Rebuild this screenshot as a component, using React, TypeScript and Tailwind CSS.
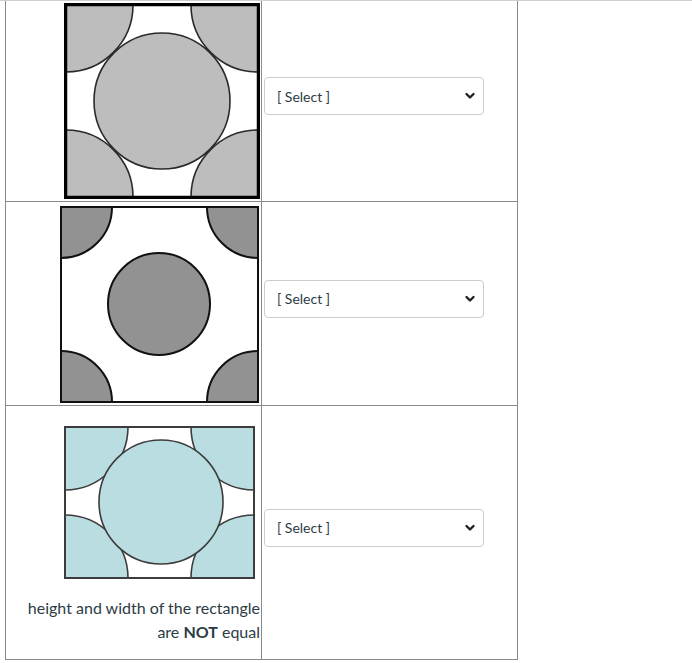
const FONT = { fontFamily: 'Lato, "Open Sans", sans-serif' }

function SelectBox() {
  return (
    <div className="flex h-[38px] w-[220px] items-center justify-between rounded-[4px] border border-[#c7cdd1] bg-white pl-[12px] pr-[6px] text-[14px] text-[#2d3b45]">
      <span>[ Select ]</span>
      <svg width="12" height="12" viewBox="0 0 12 12" className="mr-[1px]">
        <polyline points="2.5,4 6,7.5 9.5,4" fill="none" stroke="#222" strokeWidth="2.4" strokeLinecap="round" strokeLinejoin="round" />
      </svg>
    </div>
  )
}

function FccSquare() {
  const s = 196
  const r = 67
  const stroke = '#2a2a2a'
  return (
    <svg width={s} height={s} viewBox={`0 0 ${s} ${s}`}>
      <rect x="0" y="0" width={s} height={s} fill="#ffffff" />
      {[
        [2, 2],
        [s - 2, 2],
        [2, s - 2],
        [s - 2, s - 2],
      ].map(([cx, cy]) => (
        <circle key={`${cx}-${cy}`} cx={cx} cy={cy} r={r} fill="#bdbdbd" stroke={stroke} strokeWidth="1.6" />
      ))}
      <circle cx={s / 2} cy={s / 2} r={68} fill="#bdbdbd" stroke={stroke} strokeWidth="1.6" />
      <rect x="1.5" y="1.5" width={s - 3} height={s - 3} fill="none" stroke="#000" strokeWidth="3.5" />
    </svg>
  )
}

function BccSquare() {
  const w = 199
  const h = 197
  const r = 51
  return (
    <svg width={w} height={h} viewBox={`0 0 ${w} ${h}`}>
      <rect x="0" y="0" width={w} height={h} fill="#ffffff" />
      {[
        [1, 1],
        [w - 1, 1],
        [1, h - 1],
        [w - 1, h - 1],
      ].map(([cx, cy]) => (
        <circle key={`${cx}-${cy}`} cx={cx} cy={cy} r={r} fill="#929292" stroke="#111" strokeWidth="2" />
      ))}
      <circle cx={99} cy={98} r={51} fill="#929292" stroke="#111" strokeWidth="2" />
      <rect x="1" y="1" width={w - 2} height={h - 2} fill="none" stroke="#111" strokeWidth="2" />
    </svg>
  )
}

function RectCell() {
  const w = 191
  const h = 153
  const r = 63
  const stroke = '#3c3c3c'
  return (
    <svg width={w} height={h} viewBox={`0 0 ${w} ${h}`}>
      <rect x="0" y="0" width={w} height={h} fill="#ffffff" />
      {[
        [1, 1],
        [w - 1, 1],
        [1, h - 1],
        [w - 1, h - 1],
      ].map(([cx, cy]) => (
        <circle key={`${cx}-${cy}`} cx={cx} cy={cy} r={r} fill="#b9dde1" stroke={stroke} strokeWidth="1.6" />
      ))}
      <circle cx={97} cy={76} r={62} fill="#b9dde1" stroke={stroke} strokeWidth="1.6" />
      <rect x="1" y="1" width={w - 2} height={h - 2} fill="none" stroke={stroke} strokeWidth="2" />
    </svg>
  )
}

export default function App() {
  return (
    <div className="h-[663px] w-[692px] border-t border-[#cfcfcf] bg-white" style={FONT}>
      <div className="ml-[5px] w-[513px] border-x border-[#8a8a8a]">
        <div className="grid h-[201px] grid-cols-[256px_255px] border-b border-[#8a8a8a]">
          <div className="flex items-center justify-end border-r border-[#8a8a8a] pr-[1px]">
            <FccSquare />
          </div>
          <div className="flex items-center pb-[10px] pl-[2px]">
            <SelectBox />
          </div>
        </div>

        <div className="grid h-[204px] grid-cols-[256px_255px] border-b border-[#8a8a8a]">
          <div className="flex items-center justify-end border-r border-[#8a8a8a] pr-[2px] pt-[2px]">
            <BccSquare />
          </div>
          <div className="flex items-center pb-[10px] pl-[2px]">
            <SelectBox />
          </div>
        </div>

        <div className="grid h-[254px] grid-cols-[256px_255px] border-b border-[#8a8a8a]">
          <div className="flex flex-col items-end justify-center border-r border-[#8a8a8a] pr-[1px] pt-[5px]">
            <div className="mr-[5px]">
              <RectCell />
            </div>
            <p className="mt-[17px] text-right text-[16px] leading-[24px] text-[#2d3b45]">
              height and width of the rectangle
              <br />
              are <strong className="font-bold">NOT</strong> equal
            </p>
          </div>
          <div className="flex items-center pb-[10px] pl-[2px]">
            <SelectBox />
          </div>
        </div>
      </div>
    </div>
  )
}
